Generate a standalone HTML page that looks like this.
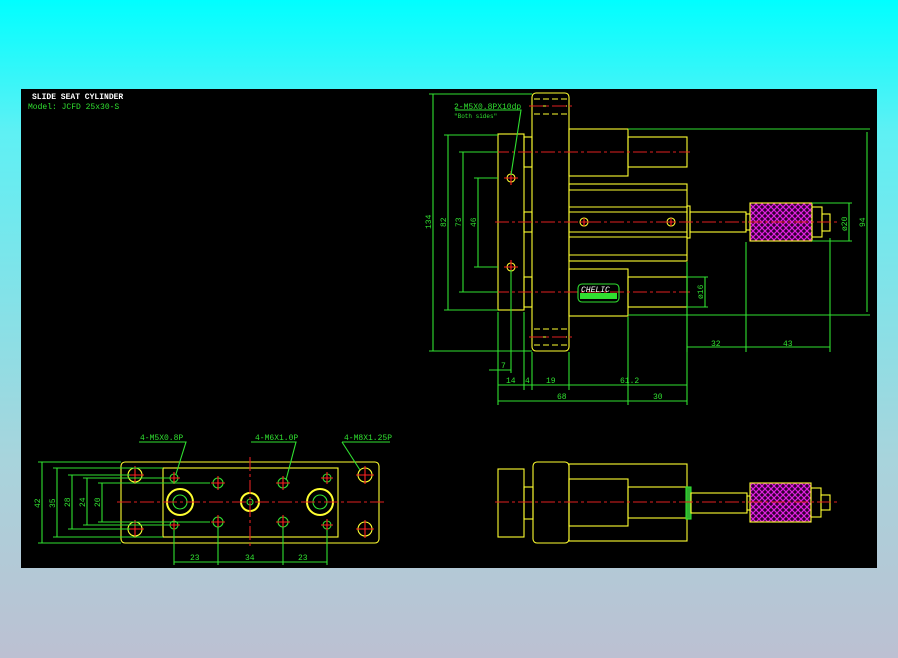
<!DOCTYPE html>
<html><head><meta charset="utf-8"><style>
html,body{margin:0;padding:0;width:898px;height:658px;overflow:hidden;background:linear-gradient(#00ffff 0%,#5ef0f4 20%,#a8d4dc 70%,#bcc0d2 100%);}
svg{position:absolute;left:0;top:0}
text{font-family:"Liberation Mono","DejaVu Sans Mono",monospace;}
</style></head><body>
<svg width="898" height="658" viewBox="0 0 898 658" xmlns="http://www.w3.org/2000/svg">
<defs>
<pattern id="kn" width="6" height="6" patternUnits="userSpaceOnUse">
<rect width="6" height="6" fill="#300030"/>
<path d="M0 0L6 6M6 0L0 6" stroke="#e020e0" stroke-width="1.2"/>
</pattern>
</defs>
<rect x="21" y="89" width="856" height="479" fill="#000"/>
<text x="32" y="99" fill="#fff" font-size="8" font-weight="bold">SLIDE SEAT CYLINDER</text>
<text x="28" y="109" fill="#30e030" font-size="8">Model: JCFD 25x30-S</text>

<g fill="none" stroke-width="1.1">
<g stroke="#ffff30">
<rect x="498" y="134" width="26" height="176"/>
<rect x="524" y="137" width="8" height="30"/>
<rect x="524" y="212" width="8" height="20"/>
<rect x="524" y="277" width="8" height="30"/>
<rect x="532" y="93" width="37" height="258" rx="4"/>
<rect x="569" y="129" width="59" height="47"/>
<rect x="628" y="137" width="59" height="30"/>
<rect x="569" y="269" width="59" height="47"/>
<rect x="628" y="277" width="59" height="30"/>
<rect x="569" y="184" width="118" height="77"/>
<path d="M569 190H687M569 207H687M569 212H687M569 232H687M569 237H687M569 255H687"/>
<rect x="687" y="206" width="3" height="32"/>
<rect x="690" y="212" width="56" height="20"/>
<rect x="746" y="214" width="4" height="16"/>
<rect x="750" y="203" width="62" height="38" fill="url(#kn)"/>
<rect x="812" y="207" width="10" height="30"/>
<rect x="822" y="214" width="8" height="17"/>
<circle cx="584" cy="222" r="4"/><circle cx="671" cy="222" r="4"/>
<circle cx="511" cy="178" r="4"/><circle cx="511" cy="267" r="4"/>
</g>
<g stroke="#ffff30" stroke-dasharray="6,3">
<path d="M534 99H567M534 106H567M534 114H567M534 329H567M534 337H567M534 345H567"/>
</g>
<g stroke="#ff2020">
<path d="M504 178H518M511 171V185M504 267H518M511 260V274M580 222H588M584 218V226M667 222H675M671 218V226"/>
</g>
<g stroke="#e02020" stroke-dasharray="14,3,3,3">
<path d="M495 152H690M495 222H838M495 292H690M529 106H573M529 337H573"/>
</g>
<rect x="578" y="284" width="41" height="18" rx="4" stroke="#30e030"/>
<rect x="580" y="293" width="37" height="6" fill="#30e030" stroke="none"/>
<text x="581" y="292" fill="#fff" font-size="8" font-style="italic">CHELIC</text>

<g stroke="#30e030">
<path d="M433 94V351M429 94H532M429 351H532"/>
<path d="M448 135V310M444 135H498M444 310H498"/>
<path d="M463 152V292M459 152H498M459 292H498"/>
<path d="M478 178V267M474 178H498M474 267H498"/>
<path d="M867 132V312M628 129H870M628 315H870"/>
<path d="M849 203V241M812 203H852M812 241H852"/>
<path d="M705 277V307M687 277H708M687 307H708"/>
<path d="M687 262V352M746 242V352M830 238V352M687 347H830"/>
<path d="M498 312V405M524 312V390M532 352V390M569 352V390M628 317V405M687 262V405"/>
<path d="M489 370H511M511 270V373"/>
<path d="M498 385H687M498 401H687"/>
<path d="M455 110H521L511 175"/>
</g>
</g>
<g fill="#30e030" font-size="8">
<text x="454" y="109">2-M5X0.8PX10dp</text>
<text x="454" y="118" font-size="6">"Both sides"</text>
<text transform="translate(431,229) rotate(-90)">134</text>
<text transform="translate(446,227) rotate(-90)">82</text>
<text transform="translate(461,227) rotate(-90)">73</text>
<text transform="translate(476,227) rotate(-90)">46</text>
<text transform="translate(865,227) rotate(-90)">94</text>
<text transform="translate(847,231) rotate(-90)">ø20</text>
<text transform="translate(703,299) rotate(-90)">ø16</text>
<text x="711" y="346">32</text><text x="783" y="346">43</text>
<text x="501" y="368">7</text>
<text x="506" y="383">14</text><text x="525" y="383">4</text><text x="546" y="383">19</text><text x="620" y="383">61.2</text>
<text x="557" y="399">68</text><text x="653" y="399">30</text>
</g>

<g fill="none" stroke-width="1.1">
<g stroke="#ffff30">
<rect x="121" y="462" width="258" height="81" rx="4"/>
<rect x="163" y="468" width="175" height="69"/>
<circle cx="180" cy="502" r="13" stroke-width="2"/><circle cx="180" cy="502" r="7" stroke="#30e030"/>
<circle cx="320" cy="502" r="13" stroke-width="2"/><circle cx="320" cy="502" r="7" stroke="#30e030"/>
<circle cx="250" cy="502" r="9" stroke-width="2"/><circle cx="250" cy="502" r="3" stroke="#30e030"/>
</g>
<g stroke="#30e030">
<circle cx="135" cy="475" r="7" stroke="#ffff30"/><circle cx="135" cy="529" r="7" stroke="#ffff30"/>
<circle cx="365" cy="475" r="7" stroke="#ffff30"/><circle cx="365" cy="529" r="7" stroke="#ffff30"/>
<circle cx="174" cy="478" r="4"/><circle cx="174" cy="525" r="4"/><circle cx="327" cy="478" r="4"/><circle cx="327" cy="525" r="4"/>
<circle cx="218" cy="483" r="5"/><circle cx="218" cy="522" r="5"/><circle cx="283" cy="483" r="5"/><circle cx="283" cy="522" r="5"/>
</g>
<g stroke="#ff2020">
<path d="M126 475H144M135 466V484M126 529H144M135 520V538M356 475H374M365 466V484M356 529H374M365 520V538"/>
<path d="M168 478H180M174 472V484M168 525H180M174 519V531M321 478H333M327 472V484M321 525H333M327 519V531"/>
<path d="M211 483H225M218 476V490M211 522H225M218 515V529M276 483H290M283 476V490M276 522H290M283 515V529"/>
</g>
<g stroke="#e02020" stroke-dasharray="14,3,3,3">
<path d="M117 502H384M250 457V548"/>
</g>
<g stroke="#30e030">
<path d="M42 462V543M38 462H121M38 543H121"/>
<path d="M57 468V537M53 468H163M53 537H163"/>
<path d="M72 475V529M68 475H130M68 529H130"/>
<path d="M87 478V525M83 478H170M83 525H170"/>
<path d="M102 483V522M98 483H210M98 522H210"/>
<path d="M174 530V565M218 527V565M283 527V565M327 530V565M174 562H327"/>
<path d="M139 442H186L176 474M251 442H296L286 480M342 442H390M342 442L360 470"/>
</g>
</g>
<g fill="#30e030" font-size="8">
<text x="140" y="440">4-M5X0.8P</text>
<text x="255" y="440">4-M6X1.0P</text>
<text x="344" y="440">4-M8X1.25P</text>
<text transform="translate(40,508) rotate(-90)">42</text>
<text transform="translate(55,508) rotate(-90)">35</text>
<text transform="translate(70,507) rotate(-90)">28</text>
<text transform="translate(85,507) rotate(-90)">24</text>
<text transform="translate(100,507) rotate(-90)">20</text>
<text x="190" y="560">23</text><text x="245" y="560">34</text><text x="298" y="560">23</text>
</g>

<g fill="none" stroke="#ffff30" stroke-width="1.1">
<rect x="498" y="469" width="26" height="68"/>
<rect x="524" y="487" width="9" height="32"/>
<rect x="533" y="462" width="36" height="81" rx="4"/>
<rect x="569" y="464" width="118" height="77"/>
<rect x="569" y="479" width="59" height="47"/>
<rect x="628" y="487" width="59" height="31"/>
<rect x="686" y="487" width="5" height="32" fill="#30b030" stroke="#30e030"/>
<rect x="691" y="493" width="56" height="20"/>
<rect x="747" y="496" width="3" height="14"/>
<rect x="750" y="483" width="61" height="39" fill="url(#kn)"/>
<rect x="811" y="488" width="10" height="29"/>
<rect x="821" y="495" width="9" height="15"/>
</g>
<path d="M495 502H838" stroke="#e02020" stroke-dasharray="14,3,3,3"/>
</svg>
</body></html>
